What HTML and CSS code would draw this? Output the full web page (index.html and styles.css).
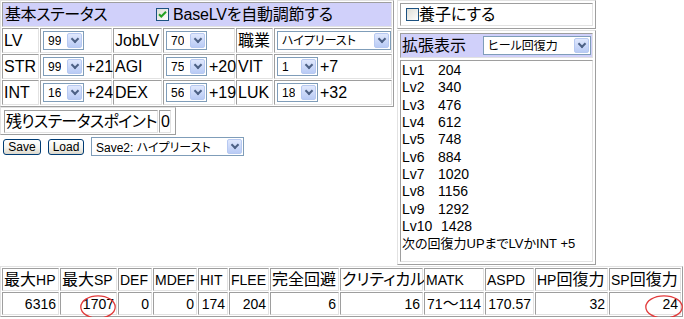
FILE: index.html
```html
<!DOCTYPE html>
<html lang="ja">
<head>
<meta charset="utf-8">
<title>ステータス計算</title>
<link rel="stylesheet" href="styles.css">
</head>
<body>
<div class="page">
  <div class="top">
    <div class="left">
      <div class="status">
        <div class="cell head">
          <span class="title">基本ステータス</span>
          <span class="check">
            <svg class="cb" width="13" height="13" viewBox="0 0 13 13"><defs><linearGradient id="cbg" x1="0" y1="0" x2="1" y2="1"><stop offset="0" stop-color="#dcdcd4"/><stop offset="1" stop-color="#ffffff"/></linearGradient></defs><rect x="0.5" y="0.5" width="12" height="12" fill="url(#cbg)" stroke="#1c5180"/><path d="M3 6.2 L5.3 8.5 L10 3.8" stroke="#21a121" stroke-width="2" fill="none"/></svg>BaseLVを自動調節する
          </span>
        </div>
        <div class="cell lbl">LV</div>
        <div class="cell"><span class="sel w41"><span class="val">99</span><span class="arrow"></span></span></div>
        <div class="cell lbl">JobLV</div>
        <div class="cell"><span class="sel w41"><span class="val">70</span><span class="arrow"></span></span></div>
        <div class="cell lbl">職業</div>
        <div class="cell"><span class="sel w114"><span class="val">ハイプリースト</span><span class="arrow"></span></span></div>

        <div class="cell lbl">STR</div>
        <div class="cell"><span class="sel w41"><span class="val">99</span><span class="arrow"></span></span><span class="bonus">+21</span></div>
        <div class="cell lbl">AGI</div>
        <div class="cell"><span class="sel w41"><span class="val">75</span><span class="arrow"></span></span><span class="bonus">+20</span></div>
        <div class="cell lbl">VIT</div>
        <div class="cell"><span class="sel w41"><span class="val">1</span><span class="arrow"></span></span><span class="bonus">+7</span></div>

        <div class="cell lbl">INT</div>
        <div class="cell"><span class="sel w41"><span class="val">16</span><span class="arrow"></span></span><span class="bonus">+24</span></div>
        <div class="cell lbl">DEX</div>
        <div class="cell"><span class="sel w41"><span class="val">56</span><span class="arrow"></span></span><span class="bonus">+19</span></div>
        <div class="cell lbl">LUK</div>
        <div class="cell"><span class="sel w41"><span class="val">18</span><span class="arrow"></span></span><span class="bonus">+32</span></div>
      </div>

      <div class="remain">
        <div class="cell rlabel">残りステータスポイント</div>
        <div class="cell rnum">0</div>
      </div>

      <div class="saverow">
        <button class="btn save">Save</button>
        <button class="btn load">Load</button>
        <span class="sel w153"><span class="val">Save2: ハイプリースト</span><span class="arrow"></span></span>
      </div>
    </div>

    <div class="right">
      <div class="adopt">
        <div class="cell adopt-cell">
          <svg class="cb0" width="13" height="13" viewBox="0 0 13 13"><defs><linearGradient id="cbg2" x1="0" y1="0" x2="1" y2="1"><stop offset="0" stop-color="#dcdcd4"/><stop offset="1" stop-color="#ffffff"/></linearGradient></defs><rect x="0.5" y="0.5" width="12" height="12" fill="url(#cbg2)" stroke="#1c5180"/></svg>養子にする
        </div>
      </div>
      <div class="ext">
        <div class="cell head ext-head">
          <span class="ext-title">拡張表示</span>
          <span class="sel w108"><span class="val">ヒール回復力</span><span class="arrow"></span></span>
        </div>
        <div class="cell list">
          <div><span class="lv">Lv1</span>204</div>
          <div><span class="lv">Lv2</span>340</div>
          <div><span class="lv">Lv3</span>476</div>
          <div><span class="lv">Lv4</span>612</div>
          <div><span class="lv">Lv5</span>748</div>
          <div><span class="lv">Lv6</span>884</div>
          <div><span class="lv">Lv7</span>1020</div>
          <div><span class="lv">Lv8</span>1156</div>
          <div><span class="lv">Lv9</span>1292</div>
          <div><span class="lv lv10">Lv10</span>1428</div>
          <div class="note">次の回復力UPまでLVかINT +5</div>
        </div>
      </div>
    </div>
  </div>

  <div class="stats">
    <div class="cell"><span class="ja">最大</span>HP</div>
    <div class="cell"><span class="ja">最大</span>SP</div>
    <div class="cell">DEF</div>
    <div class="cell">MDEF</div>
    <div class="cell">HIT</div>
    <div class="cell">FLEE</div>
    <div class="cell"><span class="ja">完全回避</span></div>
    <div class="cell"><span class="ja">クリティカル</span></div>
    <div class="cell">MATK</div>
    <div class="cell">ASPD</div>
    <div class="cell">HP<span class="ja">回復力</span></div>
    <div class="cell">SP<span class="ja">回復力</span></div>

    <div class="cell v">6316</div>
    <div class="cell v">1707<svg class="mark m1" width="36" height="24" viewBox="0 0 36 24"><ellipse cx="18" cy="12" rx="17.2" ry="11.2" fill="none" stroke="#e23a3a" stroke-width="1.3"/></svg></div>
    <div class="cell v">0</div>
    <div class="cell v">0</div>
    <div class="cell v">174</div>
    <div class="cell v">204</div>
    <div class="cell v">6</div>
    <div class="cell v">16</div>
    <div class="cell v">71<span class="ja">～</span>114</div>
    <div class="cell v">170.57</div>
    <div class="cell v">32</div>
    <div class="cell v">24<svg class="mark m2" width="38" height="24" viewBox="0 0 38 24"><ellipse cx="19" cy="12" rx="18.2" ry="11.2" fill="none" stroke="#e23a3a" stroke-width="1.3"/></svg></div>
  </div>
</div>
</body>
</html>
```

FILE: styles.css
```css
html, body {
  margin: 0;
  padding: 0;
  background: #ffffff;
  overflow: hidden;
}

body {
  font-family: "Liberation Sans", "Noto Sans CJK JP", sans-serif;
  font-size: 16px;
  color: #000000;
  font-feature-settings: "palt";
}

.top {
  display: flex;
  align-items: flex-start;
  gap: 3px;
}

.left {
  width: 394px;
}

/* outset table frame / inset cells, like border="1" tables */
.status,
.remain,
.adopt,
.ext,
.stats {
  box-sizing: border-box;
  border: 1px solid;
  border-color: #e2e2e2 #9e9e9e #9e9e9e #e2e2e2;
}

.cell {
  box-sizing: border-box;
  border: 1px solid;
  border-color: #9e9e9e #e2e2e2 #e2e2e2 #9e9e9e;
  display: flex;
  align-items: center;
  white-space: nowrap;
  padding: 0 1px;
  line-height: 1;
  min-width: 0;
}

.head {
  background: #d0d0fa;
}

/* basic status grid */
.status {
  display: grid;
  grid-template-columns: 37px 72px 49px 72px 37px 118px;
  grid-auto-rows: 25px;
  gap: 1px;
  padding: 1px;
  width: max-content;
}

.status .head {
  grid-column: 1 / -1;
  padding-left: 2px;
}

.title {
  width: 151px;
  letter-spacing: -0.4px;
}

.check {
  display: flex;
  align-items: center;
  letter-spacing: -0.2px;
}

.cb {
  margin-right: 4px;
  flex: none;
}

.lbl {
  padding-left: 1px;
}

/* XP-like select boxes */
.sel {
  box-sizing: border-box;
  display: inline-flex;
  align-items: center;
  justify-content: space-between;
  height: 19px;
  border: 1px solid #7f9db9;
  background: #ffffff;
  font-size: 12px;
  padding-left: 4px;
  margin-left: 1px;
  flex: none;
}

.sel .val {
  overflow: hidden;
}

.arrow {
  box-sizing: border-box;
  width: 15px;
  height: 15px;
  margin-right: 1px;
  border: 1px solid #b7c9f1;
  border-radius: 2px;
  background: linear-gradient(#e0e8fd, #b9cbf5);
  display: flex;
  align-items: center;
  justify-content: center;
  flex: none;
}

.arrow::after {
  content: "";
  width: 4px;
  height: 4px;
  border-right: 2px solid #4d6185;
  border-bottom: 2px solid #4d6185;
  transform: rotate(45deg);
  margin-top: -3px;
}

.w41 { width: 41px; }
.w108 { width: 108px; }
.w114 { width: 114px; }
.w153 { width: 153px; }

.bonus {
  margin-left: 2px;
}

/* remaining points */
.remain {
  display: flex;
  gap: 1px;
  padding: 2px 2px 1px 3px;
  width: 176px;
}

.remain .cell {
  height: 23px;
}

.rlabel {
  width: 154px;
  letter-spacing: -0.7px;
}

.rnum {
  width: 12px;
}

/* save / load row */
.saverow {
  display: flex;
  align-items: center;
  height: 19px;
  margin-top: 2px;
  padding-left: 3px;
}

.btn {
  box-sizing: border-box;
  height: 16px;
  border: 1px solid #003c74;
  border-radius: 3px;
  background: linear-gradient(#ffffff, #f4f3ee 55%, #dcd8cc);
  font-family: "Liberation Sans", sans-serif;
  font-size: 12px;
  color: #000000;
  padding: 0;
  display: flex;
  align-items: center;
  justify-content: center;
}

.save { width: 38px; }
.load { width: 36px; margin-left: 7px; }
.saverow .sel { margin-left: 7px; }

/* right column */
.right {
  width: 199px;
  display: flex;
  flex-direction: column;
  gap: 1px;
}

.adopt {
  padding: 2px;
}

.adopt-cell {
  height: 23px;
  padding-left: 5px;
}

.cb0 {
  flex: none;
}

.ext {
  display: grid;
  grid-template-rows: 25px 202px;
  gap: 2px;
  padding: 2px;
}

.ext-head {
  padding-left: 1px;
}

.ext-title {
  width: 82px;
}

.list {
  display: block;
  padding: 1px 0 0 1px;
  font-size: 14px;
  line-height: 17.33px;
}

.lv {
  display: inline-block;
  width: 36px;
}

.lv.lv10 {
  width: 39px;
}

.note {
  font-size: 13px;
}

/* bottom stats table */
.stats {
  margin-top: 1px;
  display: grid;
  grid-template-columns: 57px 57px 34px 44px 30px 40px 69px 83px 60px 49px 73px 72px;
  grid-auto-rows: 23px;
  gap: 1px;
  padding: 1px;
  width: max-content;
  font-size: 14px;
}

.ja {
  font-size: 16px;
}

.stats .v {
  justify-content: flex-end;
  padding-right: 2px;
  position: relative;
}

.mark {
  position: absolute;
  top: 2px;
  pointer-events: none;
}

.m1 { left: 19px; }
.m2 { left: 35px; }
```
